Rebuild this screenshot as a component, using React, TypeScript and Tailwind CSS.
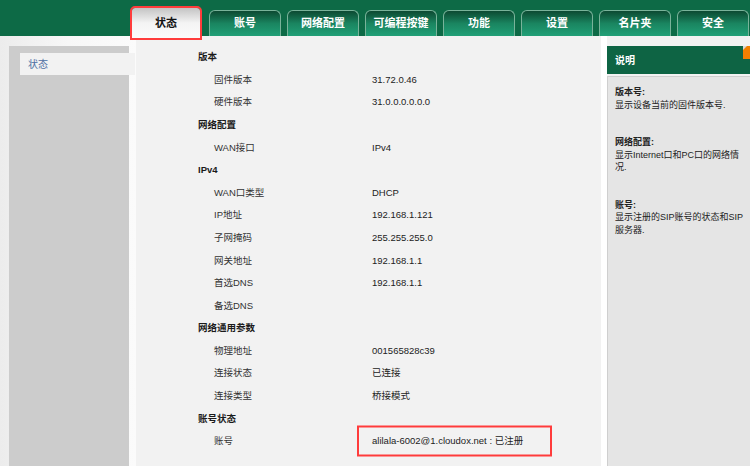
import React from 'react';

type Item = { label: string; value?: string; header?: boolean; mark?: boolean };

const rows: Item[] = [
  { label: '版本', header: true },
  { label: '固件版本', value: '31.72.0.46' },
  { label: '硬件版本', value: '31.0.0.0.0.0.0' },
  { label: '网络配置', header: true },
  { label: 'WAN接口', value: 'IPv4' },
  { label: 'IPv4', header: true },
  { label: 'WAN口类型', value: 'DHCP' },
  { label: 'IP地址', value: '192.168.1.121' },
  { label: '子网掩码', value: '255.255.255.0' },
  { label: '网关地址', value: '192.168.1.1' },
  { label: '首选DNS', value: '192.168.1.1' },
  { label: '备选DNS', value: '' },
  { label: '网络通用参数', header: true },
  { label: '物理地址', value: '001565828c39' },
  { label: '连接状态', value: '已连接' },
  { label: '连接类型', value: '桥接模式' },
  { label: '账号状态', header: true },
  { label: '账号', value: 'alilala-6002@1.cloudox.net : 已注册', mark: true },
];

const tabs = ['账号', '网络配置', '可编程按键', '功能', '设置', '名片夹', '安全'];

const notes = [
  { title: '版本号:', lines: ['显示设备当前的固件版本号.'] },
  { title: '网络配置:', lines: ['显示Internet口和PC口的网络情', '况.'] },
  { title: '账号:', lines: ['显示注册的SIP账号的状态和SIP', '服务器.'] },
];

export default function App() {
  return (
    <div
      className="w-[750px] h-[466px] overflow-hidden bg-[#f2f2f2] flex flex-col"
      style={{ fontFamily: '"Liberation Sans", "Noto Sans CJK SC", sans-serif' }}
    >
      {/* top tabs */}
      <div className="h-[36px] shrink-0 bg-[#0d6a46] flex items-end">
        <div className="ml-[132px] w-[68px] h-[30px] -mb-[2px] relative z-10 rounded-t-[3px] bg-gradient-to-b from-[#c4c4c4] via-[#f4f4f4] to-[#fbfbfb] outline-2 outline-[#ff3c3c] flex items-center justify-center text-[11px] font-bold text-[#111]">
          状态
        </div>
        <div className="ml-[9px] flex gap-[6px]">
          {tabs.map(t => (
            <div
              key={t}
              className="w-[72px] h-[26px] rounded-t-[6px] border border-b-0 border-[#79b39a] bg-gradient-to-b from-[#0c4a32] via-[#1a8560] to-[#21a077] flex items-center justify-center text-[11px] font-bold text-white"
            >
              {t}
            </div>
          ))}
        </div>
      </div>

      <div className="flex flex-1 min-h-0">
        {/* left menu */}
        <div className="w-[136px] shrink-0 bg-gradient-to-r from-[#ececec] via-[#f7f7f7] to-[#fbfbfb] pt-[10px] pl-[9px]">
          <div className="w-[120px] h-full bg-[#cccccc] pt-[7px]">
            <div className="ml-[11px] w-[115px] h-[22px] bg-[#f2f2f2] pl-[8px] flex items-center text-[10px] text-[#4e6fa3]">
              状态
            </div>
          </div>
        </div>

        {/* content */}
        <div className="w-[465px] shrink-0 bg-[#f2f2f2] pt-[10px] pl-[62px]">
          {rows.map((r, i) => (
            <div key={i} className="h-[22.6px] flex items-center text-[9.5px]">
              {r.header ? (
                <span className="font-bold text-[#1a1a1a]">{r.label}</span>
              ) : (
                <>
                  <span className="w-[174px] pl-[16px] text-[#333]">{r.label}</span>
                  <span className="relative text-[#222]">
                    {r.value}
                    {r.mark && (
                      <span className="absolute left-[-15px] top-1/2 -translate-y-1/2 w-[195px] h-[31px] border-2 border-[#ff3c3c]" />
                    )}
                  </span>
                </>
              )}
            </div>
          ))}
        </div>

        <div className="w-[6px] shrink-0 bg-white" />

        {/* help panel */}
        <div className="flex-1 pt-[10px] flex flex-col">
          <div className="h-[28px] shrink-0 bg-[#0e6444] relative flex items-center pl-[8px] text-[10px] font-bold text-white">
            说明
            <svg className="absolute right-0 top-0" width="7" height="13" viewBox="0 0 7 13">
              <polygon points="0,0 7,0 7,13 0,13" fill="#f27f00" />
              <polygon points="0,0 4,0 0,4" fill="#d9d9d9" />
            </svg>
          </div>
          <div className="h-[2px] shrink-0 bg-[#f2f2f2]" />
          <div className="flex-1 bg-[#e5e5e5] border-t border-l border-[#cfcfcf] pt-[9px] pl-[7px] text-[9px] leading-[12.5px] text-[#222]">
            {notes.map(n => (
              <div key={n.title} className="mb-[25px]">
                <div className="font-bold">{n.title}</div>
                {n.lines.map(l => (
                  <div key={l} className="whitespace-nowrap">{l}</div>
                ))}
              </div>
            ))}
          </div>
        </div>
      </div>
    </div>
  );
}
